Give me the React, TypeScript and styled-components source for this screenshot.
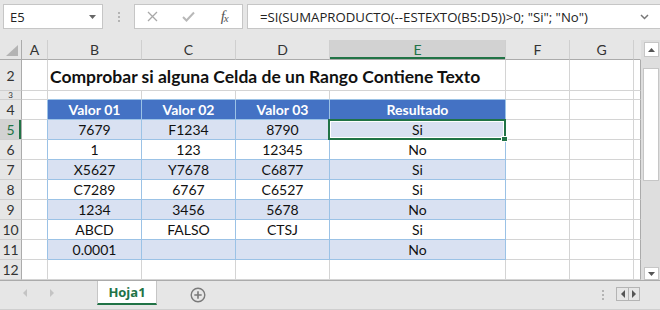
import React from 'react';
import styled, { createGlobalStyle } from 'styled-components';

const GREEN = '#217346';
const GRID_LINE = '#d4d4d4';
const TABLE_LINE = '#9bc2e6';
const HEAD_BG = '#e6e6e6';

const GlobalStyle = createGlobalStyle`
  html, body {
    margin: 0;
    padding: 0;
    background: ${HEAD_BG};
    overflow: hidden;
  }
  * {
    box-sizing: border-box;
  }
`;

const Window = styled.div`
  width: 660px;
  height: 310px;
  display: flex;
  flex-direction: column;
  background: ${HEAD_BG};
  font-family: 'Lato', 'Liberation Sans', sans-serif;
  overflow: hidden;
`;

/* ---------- formula bar ---------- */

const FormulaBar = styled.div`
  height: 40px;
  flex-shrink: 0;
  display: flex;
  align-items: flex-start;
  padding: 4px 0 0 3px;
`;

const Field = styled.div`
  height: 25px;
  background: #fff;
  border: 1px solid #c6c6c6;
  display: flex;
  align-items: center;
`;

const NameBox = styled(Field)`
  width: 100px;
  justify-content: space-between;
  padding: 0 6px;
  font-family: 'Open Sans', sans-serif;
  font-size: 13px;
  color: #222;
`;

const Grip = styled.div`
  width: 31px;
  height: 25px;
  display: flex;
  flex-direction: column;
  align-items: center;
  justify-content: center;
  gap: 2px;

  span {
    width: 2px;
    height: 2px;
    background: #b4b4b4;
  }
`;

const FxBox = styled(Field)`
  width: 109px;

  & > div {
    flex: 1;
    display: flex;
    justify-content: center;
    align-items: center;
  }
`;

const FxLabel = styled.span`
  font-family: 'Liberation Serif', serif;
  font-style: italic;
  font-size: 15px;
  color: #555;
  letter-spacing: -1px;

  small {
    font-size: 11px;
    position: relative;
    top: 1px;
  }
`;

const FormulaInput = styled(Field)`
  flex: 1;
  margin-left: 4px;
  margin-right: -2px;
  padding: 0 12px 0 12px;
  justify-content: space-between;
  font-family: 'Open Sans', sans-serif;
  font-size: 13.2px;
  color: #222;
  white-space: nowrap;
`;

/* ---------- sheet ---------- */

const Body = styled.div`
  height: 241px;
  flex-shrink: 0;
  display: flex;
`;

const Sheet = styled.div`
  width: 641px;
  background: #fff;
  border-bottom: 1px solid #ababab;
  display: grid;
  grid-template-columns: 22px 26px 94px 94px 94px 176px 64px 64px 7px;
  grid-template-rows: 20px 31px 9px repeat(9, 20px);
`;

const Corner = styled.div`
  background: ${HEAD_BG};
  border-right: 1px solid #ababab;
  border-bottom: 1px solid #ababab;
  display: flex;
  align-items: flex-end;
  justify-content: flex-end;
  padding: 0 3px 3px 0;

  span {
    width: 12px;
    height: 11px;
    background: #b4b4b4;
    clip-path: polygon(100% 0, 100% 100%, 0 100%);
  }
`;

const ColHead = styled.div<{ $active?: boolean; $last?: boolean }>`
  background: ${(p) => (p.$active ? '#d2d2d2' : HEAD_BG)};
  border-right: 1px solid ${(p) => (p.$last ? HEAD_BG : '#cfcfcf')};
  border-bottom: 1px solid #ababab;
  box-shadow: ${(p) => (p.$active ? `inset 0 -2px 0 ${GREEN}` : 'none')};
  display: flex;
  align-items: center;
  justify-content: center;
  font-size: 14px;
  color: ${(p) => (p.$active ? GREEN : '#333')};
  padding-bottom: 1px;
`;

const RowHead = styled.div<{ $active?: boolean; $short?: boolean }>`
  background: ${(p) => (p.$active ? '#d2d2d2' : HEAD_BG)};
  border-right: 1px solid #ababab;
  border-bottom: 1px solid #cfcfcf;
  box-shadow: ${(p) => (p.$active ? `inset -2px 0 0 ${GREEN}` : 'none')};
  display: flex;
  align-items: center;
  justify-content: center;
  font-size: ${(p) => (p.$short ? '8px' : '14px')};
  color: ${(p) => (p.$active ? GREEN : '#333')};
  overflow: hidden;
  line-height: ${(p) => (p.$short ? '8px' : '19px')};
`;

const Cell = styled.div<{
  $right?: string;
  $bottom?: string;
  $bg?: string;
  $head?: boolean;
}>`
  position: relative;
  background: ${(p) => p.$bg || 'transparent'};
  border-right: 1px solid ${(p) => p.$right || GRID_LINE};
  border-bottom: 1px solid ${(p) => p.$bottom || GRID_LINE};
  display: flex;
  align-items: center;
  justify-content: center;
  font-size: 14px;
  line-height: 19px;
  font-weight: ${(p) => (p.$head ? 700 : 400)};
  color: ${(p) => (p.$head ? '#fff' : '#111')};
  white-space: nowrap;
`;

const TitleCell = styled(Cell)`
  grid-column: span 4;
  justify-content: flex-start;
  padding: 2px 0 0 2px;
  font-size: 17.5px;
  font-weight: 700;
  color: #111;
`;

const Selection = styled.div`
  position: absolute;
  left: -2px;
  top: -1px;
  right: -1px;
  bottom: -1px;
  border: 2px solid ${GREEN};
  box-shadow: inset 0 0 0 1px #fff;
  pointer-events: none;
  z-index: 2;
`;

const FillHandle = styled.div`
  position: absolute;
  right: -4px;
  bottom: -4px;
  width: 7px;
  height: 6px;
  background: ${GREEN};
  border: 1px solid #fff;
`;

/* ---------- scrollbars ---------- */

const VScroll = styled.div`
  width: 19px;
  display: flex;
  flex-direction: column;
  padding: 2px 1px 0 3px;
  background: #dedede;
  border-bottom: 1px solid #ababab;
`;

const ScrollBtn = styled.div<{ $h?: number }>`
  height: ${(p) => p.$h || 15}px;
  background: #fff;
  border: 1px solid #c6c6c6;
  display: flex;
  align-items: center;
  justify-content: center;
`;

const Thumb = styled.div`
  height: 113px;
  margin-top: 11px;
  background: #fff;
  border: 1px solid #c6c6c6;
  margin-left: -1px;
`;

const Spacer = styled.div`
  flex: 1;
`;

/* ---------- tab bar ---------- */

const TabBar = styled.div`
  height: 29px;
  display: flex;
  align-items: flex-start;
  border-bottom: 1px solid #cfcfcf;
`;

const NavArrows = styled.div`
  width: 97px;
  height: 24px;
  display: flex;
  align-items: center;
  padding-left: 23px;
  gap: 23px;
`;

const SheetTab = styled.div`
  width: 60px;
  height: 24px;
  background: #fff;
  border-left: 1px solid #c6c6c6;
  border-right: 1px solid #c6c6c6;
  border-bottom: 2px solid ${GREEN};
  display: flex;
  align-items: center;
  justify-content: center;
  font-family: 'Open Sans', sans-serif;
  font-weight: 700;
  font-size: 13px;
  color: ${GREEN};
`;

const AddSheet = styled.div`
  margin-left: 33px;
  height: 28px;
  display: flex;
  align-items: center;
`;

const TabRight = styled.div`
  margin-left: auto;
  margin-right: 20px;
  height: 28px;
  display: flex;
  align-items: center;
  gap: 12px;
`;

const Dots = styled.div`
  display: flex;
  flex-direction: column;
  gap: 2px;

  span {
    width: 2px;
    height: 2px;
    background: #b4b4b4;
  }
`;

const TabScroll = styled.div`
  display: flex;
  border: 1px solid #b4b4b4;
  height: 14px;
  margin-top: -2px;

  div {
    width: 11px;
    display: flex;
    align-items: center;
    justify-content: center;
  }
  div + div {
    border-left: 1px solid #b4b4b4;
  }
`;

/* ---------- icons ---------- */

type Dir = 'up' | 'down' | 'left' | 'right';

function Triangle({ dir, color = '#555', w = 7, h = 4 }: { dir: Dir; color?: string; w?: number; h?: number }) {
  const vertical = dir === 'up' || dir === 'down';
  const width = vertical ? w : h;
  const height = vertical ? h : w;
  const pts = {
    up: `0,${h} ${w / 2},0 ${w},${h}`,
    down: `0,0 ${w},0 ${w / 2},${h}`,
    left: `${h},0 ${h},${w} 0,${w / 2}`,
    right: `0,0 0,${w} ${h},${w / 2}`,
  }[dir];
  return (
    <svg width={width} height={height} viewBox={`0 0 ${width} ${height}`}>
      <polygon points={pts} fill={color} />
    </svg>
  );
}

const CancelIcon = () => (
  <svg width="11" height="11" viewBox="0 0 11 11">
    <path d="M1 1 L10 10 M10 1 L1 10" stroke="#a8a8a8" strokeWidth="1.3" />
  </svg>
);

const EnterIcon = () => (
  <svg width="13" height="11" viewBox="0 0 13 11">
    <path d="M1 6 L4.5 9.5 L12 1.5" stroke="#b8b8b8" strokeWidth="2" fill="none" />
  </svg>
);

const Chevron = () => (
  <svg width="9" height="6" viewBox="0 0 9 6">
    <path d="M1 1 L4.5 4.5 L8 1" stroke="#777" strokeWidth="1.5" fill="none" />
  </svg>
);

const PlusCircle = () => (
  <svg width="16" height="16" viewBox="0 0 16 16">
    <circle cx="8" cy="8" r="6.8" stroke="#7a7a7a" strokeWidth="1.4" fill="none" />
    <path d="M8 4.3 V11.7 M4.3 8 H11.7" stroke="#7a7a7a" strokeWidth="1.6" />
  </svg>
);

/* ---------- data ---------- */

const COLS = ['A', 'B', 'C', 'D', 'E', 'F', 'G', ''];
const HEADERS = ['Valor 01', 'Valor 02', 'Valor 03', 'Resultado'];
const DATA = [
  ['7679', 'F1234', '8790', 'Si'],
  ['1', '123', '12345', 'No'],
  ['X5627', 'Y7678', 'C6877', 'Si'],
  ['C7289', '6767', 'C6527', 'Si'],
  ['1234', '3456', '5678', 'No'],
  ['ABCD', 'FALSO', 'CTSJ', 'Si'],
  ['0.0001', '', '', 'No'],
];
const FORMULA = '=SI(SUMAPRODUCTO(--ESTEXTO(B5:D5))>0; "Si"; "No")';

function edgeCell(key: string, c: number, right?: string, bottom?: string) {
  const r = c === 7 ? '#ababab' : right;
  return <Cell key={key} $right={r} $bottom={bottom} />;
}

function SheetRows() {
  const out: React.ReactNode[] = [];

  // column headers
  out.push(
    <Corner key="corner">
      <span />
    </Corner>
  );
  COLS.forEach((c, i) =>
    out.push(
      <ColHead key={`h${i}`} $active={c === 'E'} $last={i === 7}>
        {c}
      </ColHead>
    )
  );

  // row 2: title
  out.push(<RowHead key="r2">2</RowHead>);
  out.push(edgeCell('2a', 0));
  out.push(<TitleCell key="2t">Comprobar si alguna Celda de un Rango Contiene Texto</TitleCell>);
  [5, 6, 7].forEach((c) => out.push(edgeCell(`2${c}`, c)));

  // row 3: spacer
  out.push(
    <RowHead key="r3" $short>
      3
    </RowHead>
  );
  COLS.forEach((_, c) =>
    out.push(edgeCell(`3${c}`, c, undefined, c >= 1 && c <= 4 ? TABLE_LINE : undefined))
  );

  // row 4: table header
  out.push(<RowHead key="r4">4</RowHead>);
  out.push(edgeCell('4a', 0, TABLE_LINE));
  HEADERS.forEach((h, i) =>
    out.push(
      <Cell key={`4${i}`} $head $bg="#4472c4" $right={TABLE_LINE} $bottom={TABLE_LINE}>
        {h}
      </Cell>
    )
  );
  [5, 6, 7].forEach((c) => out.push(edgeCell(`4${c}`, c)));

  // rows 5-11: data
  DATA.forEach((row, ri) => {
    const n = ri + 5;
    const band = ri % 2 === 0 ? '#d9e1f2' : '#fff';
    out.push(
      <RowHead key={`r${n}`} $active={n === 5}>
        {n}
      </RowHead>
    );
    out.push(edgeCell(`${n}a`, 0, TABLE_LINE));
    row.forEach((v, ci) =>
      out.push(
        <Cell key={`${n}${ci}`} $bg={band} $right={TABLE_LINE} $bottom={TABLE_LINE}>
          {v}
          {n === 5 && ci === 3 && (
            <Selection>
              <FillHandle />
            </Selection>
          )}
        </Cell>
      )
    );
    [5, 6, 7].forEach((c) => out.push(edgeCell(`${n}${c}x`, c)));
  });

  // row 12: empty
  out.push(<RowHead key="r12">12</RowHead>);
  COLS.forEach((_, c) => out.push(edgeCell(`12${c}`, c)));

  return <>{out}</>;
}

export default function App() {
  return (
    <Window>
      <GlobalStyle />
      <FormulaBar>
        <NameBox>
          <span>E5</span>
          <Triangle dir="down" color="#666" />
        </NameBox>
        <Grip>
          <span />
          <span />
          <span />
        </Grip>
        <FxBox>
          <div>
            <CancelIcon />
          </div>
          <div>
            <EnterIcon />
          </div>
          <div>
            <FxLabel>
              f<small>x</small>
            </FxLabel>
          </div>
        </FxBox>
        <FormulaInput>
          <span>{FORMULA}</span>
          <Chevron />
        </FormulaInput>
      </FormulaBar>

      <Body>
        <Sheet>
          <SheetRows />
        </Sheet>
        <VScroll>
          <ScrollBtn>
            <Triangle dir="up" />
          </ScrollBtn>
          <Thumb />
          <Spacer />
          <ScrollBtn $h={13}>
            <Triangle dir="down" />
          </ScrollBtn>
        </VScroll>
      </Body>

      <TabBar>
        <NavArrows>
          <Triangle dir="left" color="#c4c4c4" w={8} h={4} />
          <Triangle dir="right" color="#c4c4c4" w={8} h={4} />
        </NavArrows>
        <SheetTab>Hoja1</SheetTab>
        <AddSheet>
          <PlusCircle />
        </AddSheet>
        <TabRight>
          <Dots>
            <span />
            <span />
            <span />
          </Dots>
          <TabScroll>
            <div>
              <Triangle dir="left" color="#555" w={8} h={4} />
            </div>
            <div>
              <Triangle dir="right" color="#555" w={8} h={4} />
            </div>
          </TabScroll>
        </TabRight>
      </TabBar>
    </Window>
  );
}
